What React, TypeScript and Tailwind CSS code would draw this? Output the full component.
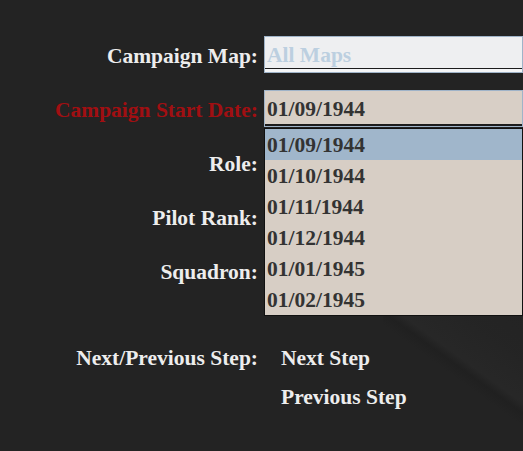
const dates = ['01/09/1944', '01/10/1944', '01/11/1944', '01/12/1944', '01/01/1945', '01/02/1945'];

function Field({ label, red, children }: { label: string; red?: boolean; children?: React.ReactNode }) {
  return (
    <div className="flex h-[54px] items-center">
      <div className={'w-[264px] shrink-0 pr-[6px] pt-[5px] text-right ' + (red ? 'text-[#a10f12]' : 'text-[#ededed]')}>
        {label}
      </div>
      <div className="relative flex-1">{children}</div>
    </div>
  );
}

export default function App() {
  return (
    <div className="relative h-[451px] w-[523px] overflow-hidden bg-[#232323] font-['Liberation_Serif',serif] text-[21.5px] font-bold leading-none">
      {/* faint diagonal sheen in the lower right */}
      <div className="pointer-events-none absolute right-0 top-[290px] h-[161px] w-[140px] bg-[linear-gradient(36deg,transparent_48%,#1f1f1f_53%,#292929_57%,#252525_75%,transparent_100%)] opacity-70" />

      <div className="relative pt-[27px]">
        <Field label="Campaign Map:">
          <div className="flex h-[37px] items-center border border-[#9fb3c8] bg-[#eeeff1] pl-[2px] pt-[3px] text-[#bccfe0] shadow-[inset_0_-3px_0_#f4f5f7,inset_0_-4px_0_#1c1c1c]">
            All Maps
          </div>
        </Field>
        <Field label="Campaign Start Date:" red>
          <div className="flex h-[37px] items-center border border-[#9fb3c8] bg-[#d8cfc6] pl-[2px] pt-[3px] text-[#333333] shadow-[inset_0_-2px_0_#1c1c1c]">
            01/09/1944
          </div>
          <ul className="absolute left-0 right-0 top-[38px] z-10 border border-[#111111] bg-[#d7cec5] text-[#333333]">
            {dates.map((d, i) => (
              <li
                key={d}
                className={'flex h-[31px] items-center pl-[2px] pt-[3px] ' + (i === 0 ? 'bg-[#a0b6cb]' : '')}
              >
                {d}
              </li>
            ))}
          </ul>
        </Field>
        <Field label="Role:" />
        <Field label="Pilot Rank:" />
        <Field label="Squadron:" />
      </div>

      <div className="relative mt-[51px] flex text-[#ededed]">
        <div className="w-[264px] shrink-0 pr-[6px] text-right">Next/Previous Step:</div>
        <div className="flex flex-col gap-[17px] pl-[17px]">
          <span>Next Step</span>
          <span>Previous Step</span>
        </div>
      </div>
    </div>
  );
}
